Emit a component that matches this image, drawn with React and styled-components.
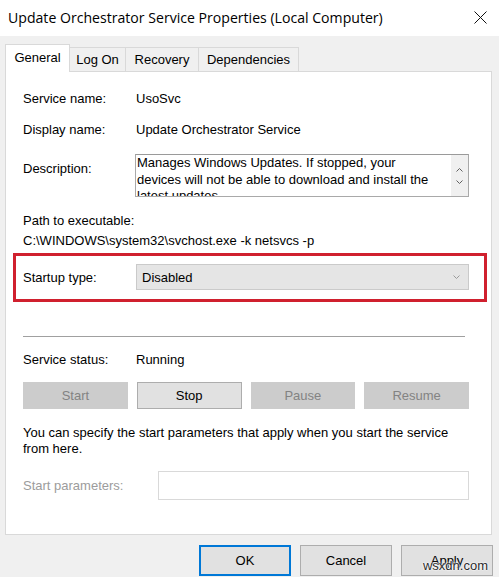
import React from "react";
import styled, { createGlobalStyle } from "styled-components";

const Global = createGlobalStyle`
  html, body { margin: 0; padding: 0; background: #f0f0f0; }
  * { box-sizing: border-box; }
`;

const Window = styled.div`
  position: relative;
  width: 499px;
  height: 577px;
  background: #f0f0f0;
  display: flex;
  flex-direction: column;
  font-family: "Liberation Sans", Arial, sans-serif;
  font-size: 13px;
  color: #000;
  overflow: hidden;
`;

const TitleBar = styled.div`
  height: 36px;
  background: #fff;
  display: flex;
  align-items: center;
  justify-content: space-between;
  padding: 0 12px 1px 8px;
`;

const Title = styled.div`
  font-family: "Open Sans", "Liberation Sans", sans-serif;
  font-size: 14.1px;
  color: #000;
  letter-spacing: 0;
`;

const Body = styled.div`
  padding: 8px 7px 0 5px;
  display: flex;
  flex-direction: column;
`;

const Tabs = styled.div`
  height: 27px;
  display: flex;
  align-items: flex-end;
`;

const Tab = styled.div`
  position: relative;
  width: ${(p) => p.$w}px;
  height: ${(p) => (p.$active ? 28 : 24)}px;
  margin-bottom: ${(p) => (p.$active ? -1 : 0)}px;
  margin-left: ${(p) => (p.$first ? 0 : -1)}px;
  z-index: ${(p) => (p.$active ? 2 : 1)};
  background: ${(p) => (p.$active ? "#fff" : "#f0f0f0")};
  border: 1px solid #d9d9d9;
  border-bottom: none;
  display: flex;
  align-items: center;
  justify-content: center;
  padding-bottom: ${(p) => (p.$active ? 2 : 0)}px;
  font-size: 13px;
  white-space: nowrap;
`;

const Panel = styled.div`
  height: 464px;
  background: #fff;
  border: 1px solid #d9d9d9;
  padding: 19px 22px 0 17px;
  display: flex;
  flex-direction: column;
`;

const Row = styled.div`
  display: flex;
  align-items: ${(p) => (p.$top ? "flex-start" : "center")};
  margin-top: ${(p) => p.$mt || 0}px;
  line-height: 16px;
  min-height: 16px;
`;

const Label = styled.div`
  width: ${(p) => p.$w || 113}px;
  flex: none;
  white-space: nowrap;
  color: ${(p) => (p.$disabled ? "#9c9c9c" : "#000")};
  padding-top: ${(p) => p.$pt || 0}px;
`;

const Value = styled.div`
  white-space: nowrap;
`;

const Line = styled.div`
  margin-top: ${(p) => p.$mt || 0}px;
  line-height: 16px;
  white-space: ${(p) => (p.$wrap ? "normal" : "nowrap")};
`;

const DescBox = styled.div`
  flex: 1;
  height: 43px;
  border: 1px solid #a9a9a9;
  border-top-color: #9a9a9a;
  display: flex;
  overflow: hidden;
`;

const DescText = styled.div`
  flex: 1;
  padding: 0 0 0 1px;
  line-height: 16.5px;
  overflow: hidden;
`;

const DescLine = styled.div`
  white-space: nowrap;
`;

const ScrollBar = styled.div`
  width: 17px;
  flex: none;
  background: #f0f0f0;
  display: flex;
  flex-direction: column;
  align-items: center;
  justify-content: center;
  gap: 8px;
  padding-top: 1px;
`;

const Highlight = styled.div`
  height: 49px;
  margin: 4px -18px 0 -10px;
  border: 3px solid #d0202e;
  padding: 0 15px 1px 7px;
  display: flex;
  align-items: center;
`;

const Select = styled.div`
  flex: 1;
  height: 26px;
  background: #e5e5e5;
  border: 1px solid #cacaca;
  display: flex;
  align-items: center;
  justify-content: space-between;
  padding: 0 8px 0 5px;
`;

const Separator = styled.div`
  height: 1px;
  background: #a0a0a0;
  margin: 34px 4px 0 0;
`;

const ButtonRow = styled.div`
  display: flex;
  gap: 9px;
  margin-top: 14px;
`;

const ActionButton = styled.div`
  flex: 1;
  height: 27px;
  display: flex;
  align-items: center;
  justify-content: center;
  background: ${(p) => (p.$disabled ? "#cccccc" : "#e1e1e1")};
  border: 1px solid ${(p) => (p.$disabled ? "#cccccc" : "#adadad")};
  color: ${(p) => (p.$disabled ? "#838383" : "#000")};
  font-size: 13px;
`;

const ParamInput = styled.div`
  flex: 1;
  height: 29px;
  border: 1px solid #d9d9d9;
  background: #fff;
`;

const Footer = styled.div`
  display: flex;
  justify-content: flex-end;
  gap: 9px;
  padding: 10px 6px 0 0;
`;

const DialogButton = styled.div`
  width: 92px;
  height: 31px;
  display: flex;
  align-items: center;
  justify-content: center;
  background: #e1e1e1;
  border: 1px solid ${(p) => (p.$default ? "#0078d7" : "#adadad")};
  box-shadow: ${(p) => (p.$default ? "inset 0 0 0 1px #0078d7" : "none")};
  font-size: 13px;
`;

const Watermark = styled.div`
  position: absolute;
  right: 11px;
  bottom: 4px;
  font-family: "Liberation Sans", Arial, sans-serif;
  font-size: 13px;
  color: #2a2a2a;
  text-shadow: 0 0 2px #fff, 0 0 2px #fff, 0 0 1px #fff;
`;

const CloseIcon = () => (
  <svg width="13" height="13" viewBox="0 0 13 13">
    <path d="M0.5 0.5 L12.5 12.5 M12.5 0.5 L0.5 12.5" stroke="#111" strokeWidth="1" fill="none" />
  </svg>
);

const Chevron = ({ up, color = "#606060", w = 7 }) => (
  <svg width={w} height="4" viewBox="0 0 7 4">
    <path d={up ? "M0.5 3.5 L3.5 0.5 L6.5 3.5" : "M0.5 0.5 L3.5 3.5 L6.5 0.5"} stroke={color} strokeWidth="1" fill="none" />
  </svg>
);

export default function App() {
  return (
    <>
      <Global />
      <Window>
        <TitleBar>
          <Title>Update Orchestrator Service Properties (Local Computer)</Title>
          <CloseIcon />
        </TitleBar>
        <Body>
          <Tabs>
            <Tab $first $active $w={65}>General</Tab>
            <Tab $w={57}>Log On</Tab>
            <Tab $w={74}>Recovery</Tab>
            <Tab $w={101}>Dependencies</Tab>
          </Tabs>
          <Panel>
            <Row>
              <Label>Service name:</Label>
              <Value>UsoSvc</Value>
            </Row>
            <Row $mt={15}>
              <Label>Display name:</Label>
              <Value>Update Orchestrator Service</Value>
            </Row>
            <Row $mt={16} $top>
              <Label $w={112} $pt={7}>Description:</Label>
              <DescBox>
                <DescText>
                  <DescLine>Manages Windows Updates. If stopped, your</DescLine>
                  <DescLine>devices will not be able to download and install the</DescLine>
                  <DescLine>latest updates.</DescLine>
                </DescText>
                <ScrollBar>
                  <Chevron up />
                  <Chevron />
                </ScrollBar>
              </DescBox>
            </Row>
            <Line $mt={16}>Path to executable:</Line>
            <Line $mt={4}>C:\WINDOWS\system32\svchost.exe -k netsvcs -p</Line>
            <Highlight>
              <Label>Startup type:</Label>
              <Select>
                <span>Disabled</span>
                <Chevron color="#9a9a9a" />
              </Select>
            </Highlight>
            <Separator />
            <Row $mt={15}>
              <Label>Service status:</Label>
              <Value>Running</Value>
            </Row>
            <ButtonRow>
              <ActionButton $disabled>Start</ActionButton>
              <ActionButton>Stop</ActionButton>
              <ActionButton $disabled>Pause</ActionButton>
              <ActionButton $disabled>Resume</ActionButton>
            </ButtonRow>
            <Line $mt={16} $wrap>
              You can specify the start parameters that apply when you start the service from here.
            </Line>
            <Row $mt={14}>
              <Label $w={135} $disabled>Start parameters:</Label>
              <ParamInput />
            </Row>
          </Panel>
        </Body>
        <Footer>
          <DialogButton $default>OK</DialogButton>
          <DialogButton>Cancel</DialogButton>
          <DialogButton>Apply</DialogButton>
        </Footer>
        <Watermark>wsxdn.com</Watermark>
      </Window>
    </>
  );
}
